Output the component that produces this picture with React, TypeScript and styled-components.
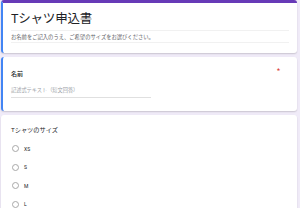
import React from "react";
import styled, { createGlobalStyle } from "styled-components";

const GlobalStyle = createGlobalStyle`
  html, body {
    margin: 0;
    padding: 0;
    background: #f0ebf8;
    font-family: Roboto, "Noto Sans CJK JP", sans-serif;
  }
`;

const Page = styled.div`
  display: flex;
  flex-direction: column;
  gap: 4px;
  padding: 0 3px 0 1px;
  width: 300px;
  height: 208px;
  box-sizing: border-box;
  overflow: hidden;
`;

const Card = styled.div<{ $active?: boolean; $header?: boolean; $h?: number }>`
  position: relative;
  background: #fff;
  border-radius: 3px;
  box-shadow: 0 1px 1.5px rgba(0, 0, 0, 0.16);
  box-sizing: border-box;
  padding: 0 8px 0 8px;
  flex: 0 0 auto;
  height: ${(p) => (p.$h ? `${p.$h}px` : "auto")};
  border-top: ${(p) => (p.$header ? "3px solid #673ab7" : "none")};
  border-left: ${(p) => (p.$active ? "2px solid #4285f4" : "2px solid transparent")};
`;

const Title = styled.h1`
  margin: 0;
  padding-top: 9px;
  font-size: 12.5px;
  line-height: 13px;
  font-weight: 400;
  color: #202124;
  letter-spacing: -0.2px;
`;

const DescBox = styled.div`
  margin-top: 5px;
  height: 13px;
  border-top: 1px solid #f1f1f1;
  border-bottom: 1px solid #f1f1f1;
  display: flex;
  align-items: center;
  font-size: 5.3px;
  color: #5f6368;
  padding-top: 1px;
  box-sizing: border-box;
`;

const QuestionLabel = styled.div`
  padding-top: 13px;
  font-size: 6px;
  line-height: 7px;
  color: #202124;
  font-weight: 500;
`;

const Required = styled.span`
  position: absolute;
  top: 11px;
  right: 17px;
  font-size: 7px;
  line-height: 7px;
  color: #d93025;
`;

const ShortAnswer = styled.div`
  margin-top: 10px;
  width: 140px;
  padding-bottom: 4px;
  border-bottom: 1px solid #e0e0e0;
  font-size: 5.2px;
  line-height: 6px;
  color: #9aa0a6;
`;

const SizeTitle = styled.div`
  padding-top: 12px;
  font-size: 6.2px;
  line-height: 7px;
  color: #202124;
`;

const Options = styled.div`
  display: flex;
  flex-direction: column;
  gap: 11.5px;
  margin-top: 11px;
`;

const Option = styled.label`
  display: flex;
  align-items: center;
  gap: 5px;
  height: 7px;
  font-size: 5px;
  color: #202124;
`;

const Radio = styled.span`
  width: 7px;
  height: 7px;
  border: 1px solid #a8a8a8;
  border-radius: 50%;
  box-sizing: border-box;
  margin-left: 1px;
`;

const sizes = ["XS", "S", "M", "L"];

export default function App() {
  return (
    <>
      <GlobalStyle />
      <Page>
        <Card $header $active $h={53}>
          <Title>Tシャツ申込書</Title>
          <DescBox>お名前をご記入のうえ、ご希望のサイズをお選びください。</DescBox>
        </Card>
        <Card $active $h={54}>
          <QuestionLabel>名前</QuestionLabel>
          <Required>*</Required>
          <ShortAnswer>記述式テキスト（短文回答）</ShortAnswer>
        </Card>
        <Card $h={120}>
          <SizeTitle>Tシャツのサイズ</SizeTitle>
          <Options>
            {sizes.map((s) => (
              <Option key={s}>
                <Radio />
                {s}
              </Option>
            ))}
          </Options>
        </Card>
      </Page>
    </>
  );
}
